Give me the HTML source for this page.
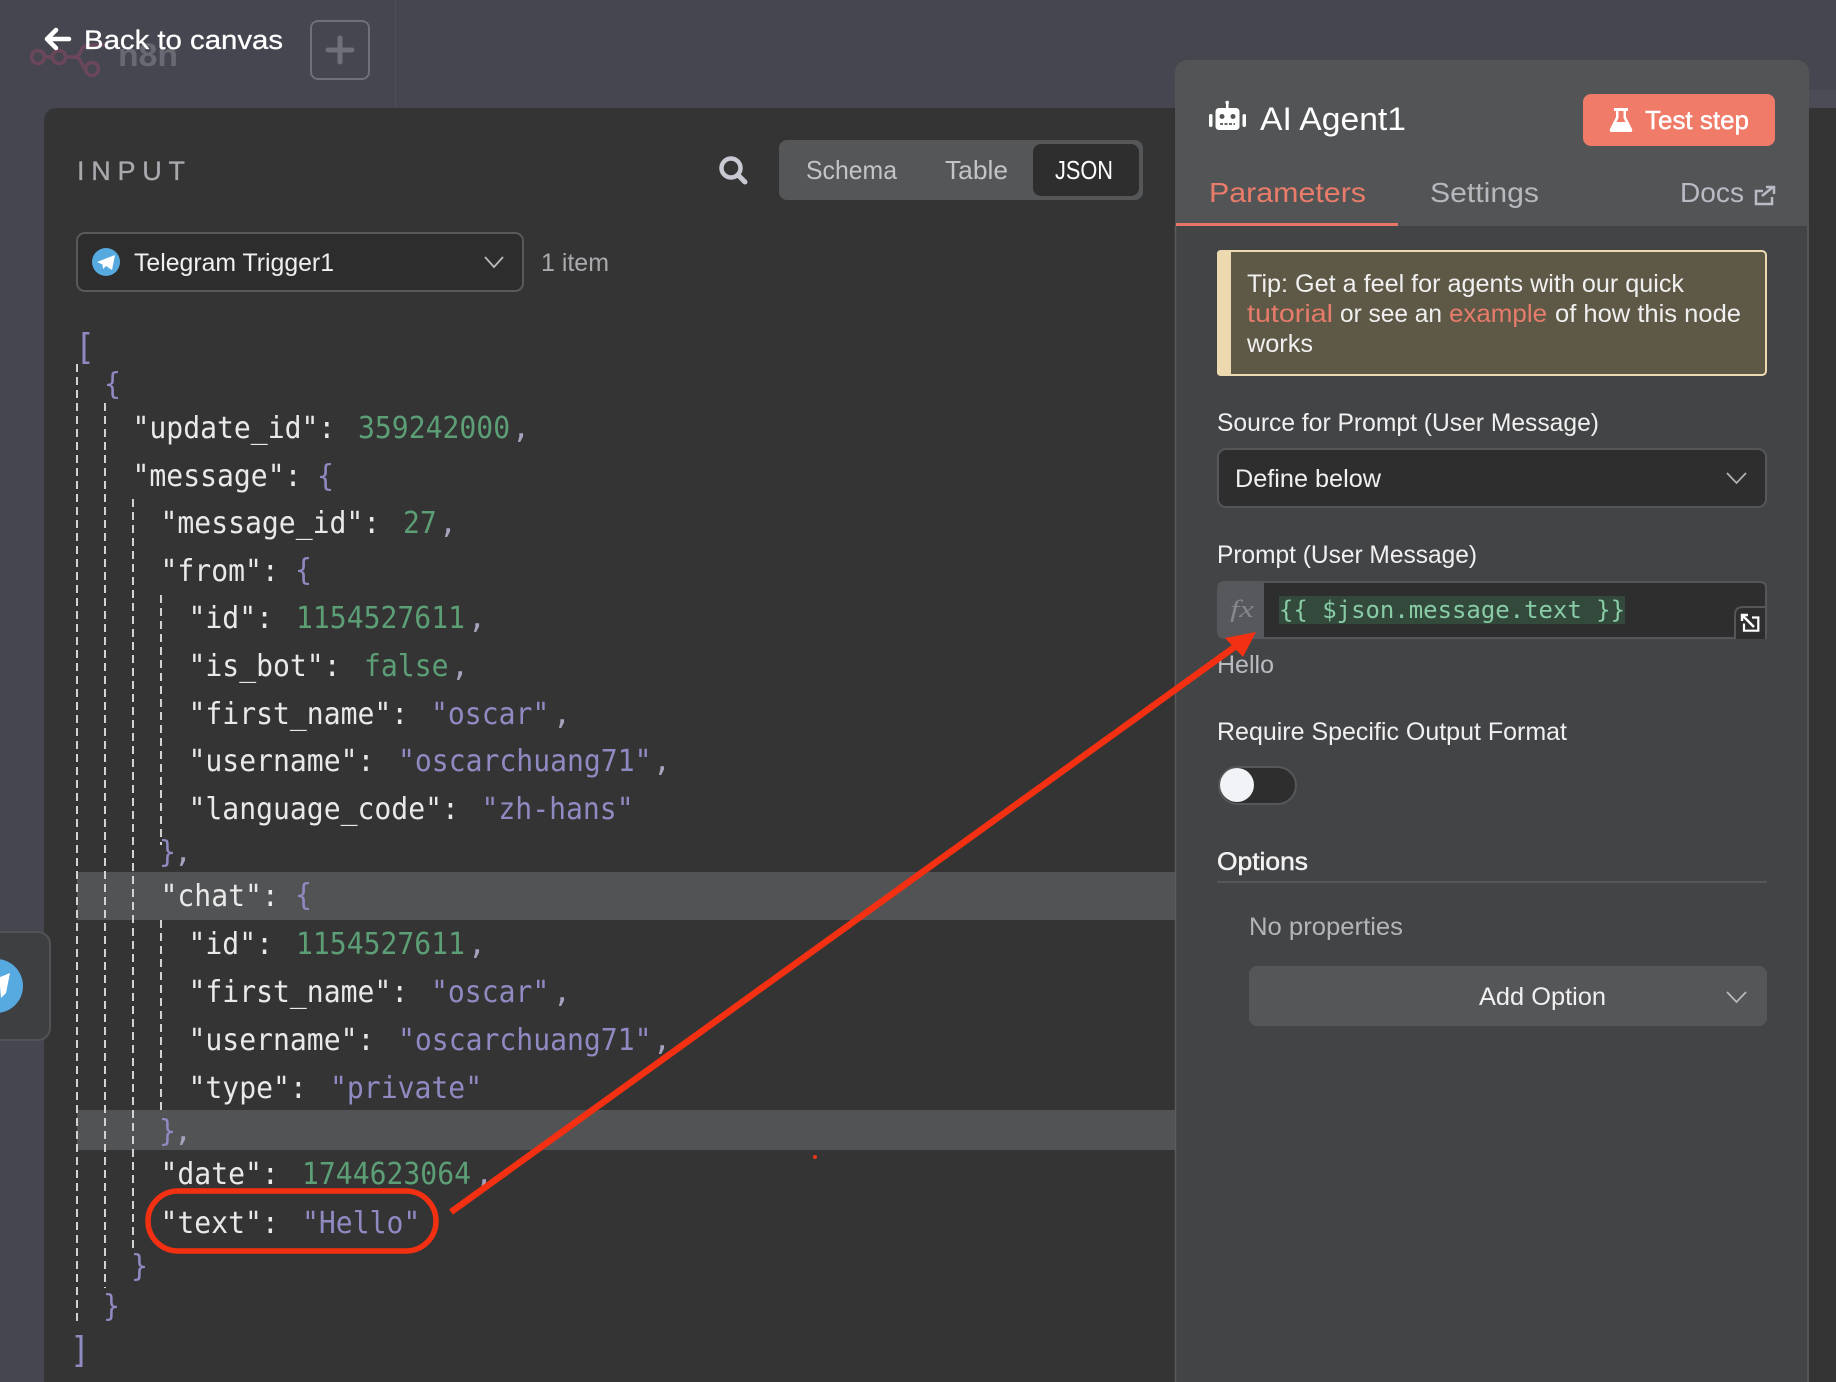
<!DOCTYPE html>
<html lang="en">
<head>
<meta charset="utf-8">
<title>AI Agent1</title>
<style>
html,body{margin:0;padding:0;width:1836px;height:1382px;overflow:hidden;background:#45464f}
svg{display:block}
text{font-family:"Liberation Sans",sans-serif;white-space:pre}
.m{font-family:"DejaVu Sans Mono","Liberation Mono",monospace;font-size:30px}
.k{fill:#e9e9e9}.n{fill:#5c9e75}.s{fill:#8f8ac2}.p{fill:#8f8ac2}.c{fill:#a5a3bd}
.t{font-size:25px;fill:#f0f0f0}
</style>
</head>
<body>
<svg xmlns="http://www.w3.org/2000/svg" width="1836" height="1382" viewBox="0 0 1836 1382">
<rect width="1836" height="1382" fill="#45464f"/>
<rect x="395" y="0" width="1" height="108" fill="#4e4f59"/>

<!-- ghost logo -->
<g fill="none" stroke="#6b475b" stroke-width="3.5">
<circle cx="38" cy="57" r="6.5"/><circle cx="59" cy="57" r="6.5"/><circle cx="92" cy="69" r="6.5"/>
<path d="M45 57H52M66 57H74Q78 57 80 53L82 49Q84 45 89 45H108M74 57Q78 57 80 60L82 64Q84 69 86 69"/>
</g>
<text x="118" y="66" font-size="32" font-weight="700" fill="#686973" textLength="60" lengthAdjust="spacingAndGlyphs">n8n</text>

<!-- back -->
<path d="M48 39H69M56 30L47 39L56 48" fill="none" stroke="#fff" stroke-width="4.500" stroke-linecap="round" stroke-linejoin="round"/>
<text x="84" y="49" font-size="27" fill="#fff" stroke="#fff" stroke-width=".3" textLength="199" lengthAdjust="spacingAndGlyphs">Back to canvas</text>
<rect x="311" y="21" width="58" height="58" rx="7" fill="none" stroke="#6f707a" stroke-width="2"/>
<path d="M340 38V62M328 50H352" stroke="#6f707a" stroke-width="5" stroke-linecap="round"/>

<!-- left dark panel -->
<path d="M44 1382V122Q44 108 58 108H1836V1382Z" fill="#343434"/>

<!-- right of panel top strip -->
<rect x="1808" y="90" width="28" height="18" fill="#4b4c56"/>

<text x="77" y="180" font-size="27" fill="#a8a8ad" stroke="#a8a8ad" stroke-width=".3" textLength="108" lengthAdjust="spacing">INPUT</text>

<!-- search -->
<circle cx="731" cy="168" r="9.5" fill="none" stroke="#c8c9d2" stroke-width="4.5"/>
<path d="M738 175L745 182" stroke="#c8c9d2" stroke-width="5" stroke-linecap="round"/>

<!-- segmented -->
<rect x="779" y="140" width="364" height="60" rx="8" fill="#555658"/>
<rect x="1033" y="144" width="106" height="52" rx="8" fill="#2e2e2e"/>
<text x="806" y="179" font-size="26" fill="#c3c4c8" textLength="91" lengthAdjust="spacingAndGlyphs">Schema</text>
<text x="945" y="179" font-size="26" fill="#c3c4c8" textLength="63" lengthAdjust="spacingAndGlyphs">Table</text>
<text x="1055" y="179" font-size="26" fill="#fff" textLength="58" lengthAdjust="spacingAndGlyphs">JSON</text>

<!-- dropdown -->
<rect x="77" y="233" width="446" height="58" rx="8" fill="#2d2d2d" stroke="#58595b" stroke-width="2"/>
<circle cx="106" cy="262" r="14" fill="#57aae0"/>
<path d="M97 262L115 255L112 270L106 266L103 269L102.500 264.500Z" fill="#fff"/>
<text x="134" y="271" font-size="25" fill="#f0f0f0" textLength="200" lengthAdjust="spacingAndGlyphs">Telegram Trigger1</text>
<path d="M485 257L494 267L503 257" fill="none" stroke="#b9babd" stroke-width="1.800"/>
<text x="541" y="271" font-size="25" fill="#a9aaad" textLength="68" lengthAdjust="spacingAndGlyphs">1 item</text>

<!-- highlighted rows -->
<rect x="77" y="872" width="1100" height="48" fill="#525355"/>
<rect x="77" y="1110" width="1100" height="40" fill="#525355"/>

<!-- guides -->
<g stroke="#d2d2d2" stroke-width="2" stroke-dasharray="8 5" fill="none">
<path d="M77 364V1326"/>
<path d="M105 403V1288"/>
<path d="M133 499V1248"/>
<path d="M161 595V845"/>
<path d="M161 920V1110"/>
</g>

<!-- JSON -->
<text class="m p" x="75" y="359" style="font-size:36px" textLength="20" lengthAdjust="spacingAndGlyphs">[</text>
<text class="m p" x="104" y="394" textLength="17" lengthAdjust="spacingAndGlyphs">{</text>
<text class="m k" x="132.500" y="438" textLength="202.800" lengthAdjust="spacingAndGlyphs">"update_id":</text><text class="m n" x="358" y="438" textLength="152.100" lengthAdjust="spacingAndGlyphs">359242000</text><text class="m c" x="512" y="438">,</text>
<text class="m k" x="132.500" y="486" textLength="169" lengthAdjust="spacingAndGlyphs">"message":</text><text class="m p" x="317" y="486" textLength="17" lengthAdjust="spacingAndGlyphs">{</text>
<text class="m k" x="160.500" y="533" textLength="219.700" lengthAdjust="spacingAndGlyphs">"message_id":</text><text class="m n" x="403" y="533" textLength="33.800" lengthAdjust="spacingAndGlyphs">27</text><text class="m c" x="439" y="533">,</text>
<text class="m k" x="160.500" y="581" textLength="118.300" lengthAdjust="spacingAndGlyphs">"from":</text><text class="m p" x="295" y="580" textLength="17" lengthAdjust="spacingAndGlyphs">{</text>
<text class="m k" x="188.500" y="628" textLength="84.500" lengthAdjust="spacingAndGlyphs">"id":</text><text class="m n" x="296" y="628" textLength="169" lengthAdjust="spacingAndGlyphs">1154527611</text><text class="m c" x="468" y="628">,</text>
<text class="m k" x="188.500" y="676" textLength="152.100" lengthAdjust="spacingAndGlyphs">"is_bot":</text><text class="m n" x="364" y="676" textLength="84.500" lengthAdjust="spacingAndGlyphs">false</text><text class="m c" x="451" y="676">,</text>
<text class="m k" x="188.500" y="724" textLength="219.700" lengthAdjust="spacingAndGlyphs">"first_name":</text><text class="m s" x="431" y="724" textLength="118.300" lengthAdjust="spacingAndGlyphs">"oscar"</text><text class="m c" x="553" y="724">,</text>
<text class="m k" x="188.500" y="771" textLength="185.900" lengthAdjust="spacingAndGlyphs">"username":</text><text class="m s" x="398" y="771" textLength="253.500" lengthAdjust="spacingAndGlyphs">"oscarchuang71"</text><text class="m c" x="653" y="771">,</text>
<text class="m k" x="188.500" y="819" textLength="270.400" lengthAdjust="spacingAndGlyphs">"language_code":</text><text class="m s" x="481.500" y="819" textLength="152.100" lengthAdjust="spacingAndGlyphs">"zh-hans"</text>
<text class="m p" x="159" y="862" textLength="17" lengthAdjust="spacingAndGlyphs">}</text><text class="m c" x="174" y="862">,</text>
<text class="m k" x="160.500" y="906" textLength="118.300" lengthAdjust="spacingAndGlyphs">"chat":</text><text class="m p" x="295" y="905" textLength="17" lengthAdjust="spacingAndGlyphs">{</text>
<text class="m k" x="188.500" y="954" textLength="84.500" lengthAdjust="spacingAndGlyphs">"id":</text><text class="m n" x="296" y="954" textLength="169" lengthAdjust="spacingAndGlyphs">1154527611</text><text class="m c" x="468" y="954">,</text>
<text class="m k" x="188.500" y="1002" textLength="219.700" lengthAdjust="spacingAndGlyphs">"first_name":</text><text class="m s" x="431" y="1002" textLength="118.300" lengthAdjust="spacingAndGlyphs">"oscar"</text><text class="m c" x="553" y="1002">,</text>
<text class="m k" x="188.500" y="1050" textLength="185.900" lengthAdjust="spacingAndGlyphs">"username":</text><text class="m s" x="398" y="1050" textLength="253.500" lengthAdjust="spacingAndGlyphs">"oscarchuang71"</text><text class="m c" x="653" y="1050">,</text>
<text class="m k" x="188.500" y="1098" textLength="118.300" lengthAdjust="spacingAndGlyphs">"type":</text><text class="m s" x="330" y="1098" textLength="152.100" lengthAdjust="spacingAndGlyphs">"private"</text>
<text class="m p" x="159" y="1141" textLength="17" lengthAdjust="spacingAndGlyphs">}</text><text class="m c" x="174" y="1141">,</text>
<text class="m k" x="160.500" y="1184" textLength="118.300" lengthAdjust="spacingAndGlyphs">"date":</text><text class="m n" x="302" y="1184" textLength="169" lengthAdjust="spacingAndGlyphs">1744623064</text><text class="m c" x="475" y="1184">,</text>
<text class="m k" x="160.500" y="1233" textLength="118.300" lengthAdjust="spacingAndGlyphs">"text":</text><text class="m s" x="302" y="1233" textLength="118.300" lengthAdjust="spacingAndGlyphs">"Hello"</text>
<text class="m p" x="131" y="1276" textLength="17" lengthAdjust="spacingAndGlyphs">}</text>
<text class="m p" x="103" y="1316" textLength="17" lengthAdjust="spacingAndGlyphs">}</text>
<text class="m p" x="70" y="1362" style="font-size:36px" textLength="20" lengthAdjust="spacingAndGlyphs">]</text>

<!-- side node -->
<rect x="-12" y="932" width="62" height="108" rx="12" fill="#3e3f41" stroke="#525356" stroke-width="2"/>
<circle cx="-4" cy="986" r="27" fill="#57aae0"/>
<path d="M-2 978L10 973L6 993L1 998L0 986Z" fill="#fff"/>

<!-- right panel -->
<path d="M1175 1382V74Q1175 60 1189 60H1795Q1809 60 1809 74V1382Z" fill="#434446"/>
<path d="M1175 226V74Q1175 60 1189 60H1795Q1809 60 1809 74V226Z" fill="#535456"/>
<path d="M1175.500 226V1382M1808 226V1382" stroke="#5a5b5e" stroke-width="1.500"/>

<!-- robot -->
<g fill="#fff">
<rect x="1215.500" y="108" width="24" height="22" rx="3.500"/>
<rect x="1226" y="102" width="2.500" height="7"/>
<circle cx="1227.200" cy="102.500" r="1.800"/>
<rect x="1209" y="114" width="3.500" height="13" rx="1.700"/>
<rect x="1242.500" y="114" width="3.500" height="13" rx="1.700"/>
</g>
<circle cx="1222" cy="116.500" r="2.500" fill="#535456"/><circle cx="1233" cy="116.500" r="2.500" fill="#535456"/>
<path d="M1220 124H1235" stroke="#535456" stroke-width="1.800" stroke-dasharray="3 1.500"/>
<text x="1260" y="130" font-size="32" fill="#fff" textLength="146" lengthAdjust="spacingAndGlyphs">AI Agent1</text>

<!-- test step -->
<rect x="1583" y="94" width="192" height="52" rx="8" fill="#ef7b68"/>
<path d="M1614 108H1628V111H1626V117L1632 129Q1633 132 1630 132H1612Q1609 132 1610 129L1616 117V111H1614Z" fill="#fff"/>
<path d="M1618.500 111H1623.500V118L1625.500 122H1616.500L1618.500 118Z" fill="#ef7b68"/>
<text x="1645" y="129" font-size="26" fill="#fff" stroke="#fff" stroke-width=".4" textLength="104" lengthAdjust="spacingAndGlyphs">Test step</text>

<!-- tabs -->
<text x="1209" y="202" font-size="28" fill="#ea7c6a" textLength="157" lengthAdjust="spacingAndGlyphs">Parameters</text>
<text x="1430" y="202" font-size="28" fill="#b6b8bd" textLength="109" lengthAdjust="spacingAndGlyphs">Settings</text>
<text x="1680" y="202" font-size="28" fill="#b9bbc4" textLength="64" lengthAdjust="spacingAndGlyphs">Docs</text>
<g fill="none" stroke="#b9bbc4" stroke-width="2.500">
<path d="M1763 191H1756V204H1772V197"/>
<path d="M1762 196L1773 187M1766 187H1774V194"/>
</g>
<rect x="1176" y="223" width="222" height="3" fill="#e8776a"/>

<!-- tip -->
<rect x="1218" y="251" width="548" height="124" rx="4" fill="#5e5847" stroke="#ecd9b0" stroke-width="2"/>
<path d="M1231 250H1221Q1217 250 1217 254V372Q1217 376 1221 376H1231Z" fill="#ecd9b0"/>
<text class="t" x="1247" y="292" textLength="437" lengthAdjust="spacingAndGlyphs">Tip: Get a feel for agents with our quick</text>
<text class="t" x="1247" y="322" style="fill:#e87c6a" textLength="86" lengthAdjust="spacingAndGlyphs">tutorial</text>
<text class="t" x="1340" y="322" textLength="102" lengthAdjust="spacingAndGlyphs">or see an</text>
<text class="t" x="1449" y="322" style="fill:#e87c6a" textLength="98" lengthAdjust="spacingAndGlyphs">example</text>
<text class="t" x="1555" y="322" textLength="186" lengthAdjust="spacingAndGlyphs">of how this node</text>
<text class="t" x="1247" y="352" textLength="66" lengthAdjust="spacingAndGlyphs">works</text>

<text class="t" x="1217" y="431" textLength="382" lengthAdjust="spacingAndGlyphs">Source for Prompt (User Message)</text>
<rect x="1218" y="449" width="548" height="58" rx="8" fill="#2e2e2e" stroke="#55565a" stroke-width="2"/>
<text class="t" x="1235" y="487" textLength="146" lengthAdjust="spacingAndGlyphs">Define below</text>
<path d="M1727 473L1736.500 483L1746 473" fill="none" stroke="#b0b1b4" stroke-width="1.800"/>

<text class="t" x="1217" y="563" textLength="260" lengthAdjust="spacingAndGlyphs">Prompt (User Message)</text>
<path d="M1263 582H1760Q1766 582 1766 588V638H1263Z" fill="#2e2e2e" stroke="#55565a" stroke-width="2"/>
<path d="M1263 581H1225Q1217 581 1217 589V631Q1217 639 1225 639H1263Z" fill="#57585b"/>
<text x="1230" y="617" font-size="24" font-style="italic" fill="#85868d" style="font-family:'Liberation Serif',serif" textLength="24" lengthAdjust="spacingAndGlyphs">fx</text>
<rect x="1279" y="596" width="346" height="28" fill="#33493c"/>
<text x="1279" y="618" font-size="24" fill="#88cca6" style="font-family:'DejaVu Sans Mono',monospace" textLength="346" lengthAdjust="spacingAndGlyphs">{{ $json.message.text }}</text>
<path d="M1735 639V615Q1735 607 1743 607H1766V639" fill="#2e2e2e" stroke="#55565a" stroke-width="2"/>
<path d="M1742 615L1754 627M1742 621V615H1748" fill="none" stroke="#fff" stroke-width="2.500"/>
<path d="M1752 617.500H1758.300V630.700H1744V623.500" fill="none" stroke="#fff" stroke-width="2.200"/>

<text x="1217" y="673" font-size="25" fill="#babbc1" textLength="57" lengthAdjust="spacingAndGlyphs">Hello</text>

<text class="t" x="1217" y="740" textLength="350" lengthAdjust="spacingAndGlyphs">Require Specific Output Format</text>
<rect x="1219" y="767" width="77" height="37" rx="18.500" fill="#2e2e2e" stroke="#56575a" stroke-width="2"/>
<circle cx="1237" cy="785" r="17" fill="#f2f3f6"/>

<text x="1217" y="870" font-size="25" fill="#f2f2f2" stroke="#f2f2f2" stroke-width=".5" textLength="91" lengthAdjust="spacingAndGlyphs">Options</text>
<rect x="1217" y="881" width="550" height="2" fill="#56575a"/>
<text x="1249" y="935" font-size="25" fill="#b4b5ba" textLength="154" lengthAdjust="spacingAndGlyphs">No properties</text>
<rect x="1249" y="966" width="518" height="60" rx="8" fill="#555658"/>
<text class="t" x="1479" y="1005" textLength="127" lengthAdjust="spacingAndGlyphs">Add Option</text>
<path d="M1727 992L1736.500 1002L1746 992" fill="none" stroke="#b8b9bc" stroke-width="1.800"/>

<!-- red annotations -->
<rect x="148" y="1191" width="288" height="60" rx="30" fill="none" stroke="#f33112" stroke-width="5.500"/>
<path d="M451 1212L1236 646" stroke="#f33112" stroke-width="6.500"/>
<path d="M1256 632L1225 638L1243 657Z" fill="#f33112"/>
<circle cx="815" cy="1157" r="2" fill="#e8371c"/>
</svg>
</body>
</html>
